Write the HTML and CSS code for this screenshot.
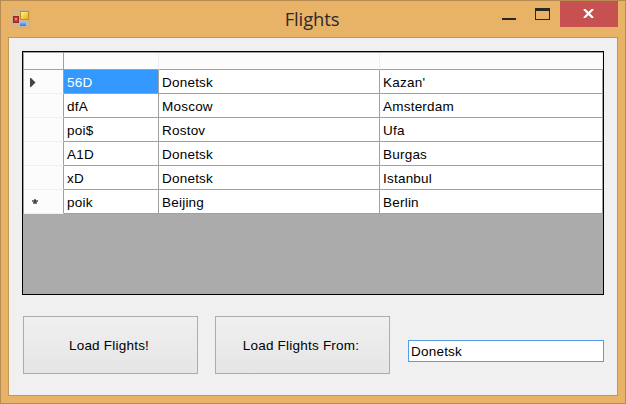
FILE: index.html
```html
<!DOCTYPE html>
<html lang="en">
<head>
<meta charset="utf-8">
<title>Flights</title>
<link rel="stylesheet" href="styles.css">
</head>
<body>
<div class="window">
  <header class="titlebar">
    <svg class="app-icon" width="18" height="18" viewBox="0 0 18 18">
      <defs>
        <linearGradient id="gold" x1="0" y1="0" x2="1" y2="1"><stop offset="0" stop-color="#fff3a0"/><stop offset="1" stop-color="#e8ac08"/></linearGradient>
        <linearGradient id="blue" x1="0" y1="0" x2="0" y2="1"><stop offset="0" stop-color="#8fc0fb"/><stop offset="1" stop-color="#2f76e0"/></linearGradient>
      </defs>
      <path d="M.5 .5h17v17H.5z" fill="#cbb897" stroke="#c8b08a"/>
      <path d="M2 2h4v3H2zM2 14h4v2H2z" fill="#e2b266"/>
      <rect x="1.5" y="6.5" width="5" height="6" fill="#c93a34" stroke="#a02420"/>
      <rect x="3" y="8" width="2" height="2" fill="#e58880"/>
      <rect x="8.5" y="1.5" width="8" height="8" fill="url(#gold)" stroke="#c2921c"/>
      <rect x="8" y="12" width="6" height="4" fill="url(#blue)"/>
    </svg>
    <h1 class="title">Flights</h1>
    <div class="controls">
      <svg class="minimize" width="14" height="12" viewBox="0 0 14 12"><path d="M0 10h14v2H0z" fill="#282828"/></svg>
      <svg class="maximize" width="15" height="12" viewBox="0 0 15 12"><path d="M0 0h15v12H0zM1 3v8h13V3z" fill="#282828" fill-rule="evenodd"/></svg>
      <div class="close">
        <svg width="11" height="9" viewBox="0 0 11 9"><path d="M1 0L10 9M10 0L1 9" stroke="#fff" stroke-width="2.2"/></svg>
      </div>
    </div>
  </header>
  <main class="client">
    <div class="grid-view">
      <table class="grid">
        <colgroup><col class="c-head"><col class="c-code"><col class="c-from"><col class="c-to"></colgroup>
        <thead><tr><th class="corner"></th><th></th><th></th><th></th></tr></thead>
        <tbody>
          <tr><th><svg class="marker" width="6" height="9" viewBox="0 0 6 9"><path d="M0 0h1L5.5 4.5L1 9H0z" fill="#444"/></svg></th><td class="selected">56D</td><td>Donetsk</td><td>Kazan'</td></tr>
          <tr><th></th><td>dfA</td><td>Moscow</td><td>Amsterdam</td></tr>
          <tr><th></th><td>poi$</td><td>Rostov</td><td>Ufa</td></tr>
          <tr><th></th><td>A1D</td><td>Donetsk</td><td>Burgas</td></tr>
          <tr><th></th><td>xD</td><td>Donetsk</td><td>Istanbul</td></tr>
          <tr><th><svg class="marker new-row" width="6" height="6" viewBox="0 0 6 6"><path d="M2 0h2v1h2v2H5v2H1V3H0V1h2z" fill="#777"/><path d="M2 1h2v3H2z" fill="#444"/></svg></th><td>poik</td><td>Beijing</td><td>Berlin</td></tr>
        </tbody>
      </table>
    </div>
    <div class="actions">
      <button class="button">Load Flights!</button>
      <button class="button">Load Flights From:</button>
      <input class="city" type="text" value="Donetsk">
    </div>
  </main>
</div>
</body>
</html>
```
FILE: styles.css
```css
* { box-sizing: border-box; }
body {
  margin: 0;
  font-family: "Liberation Sans", Arial, sans-serif;
  font-size: 13.5px;
  letter-spacing: 0.22px;
  color: #000;
}
.window {
  width: 626px;
  height: 404px;
  display: flex;
  flex-direction: column;
  padding: 0 7px 7px;
  border: 1px solid #b58b51;
  background: #e8b267;
}
.titlebar {
  height: 36px;
  flex: none;
  display: grid;
  grid-template-columns: 116px 1fr 116px;
}
.app-icon { margin: 9px 0 0 4px; }
.title {
  margin: 4px 2px 0 0;
  font: 400 18.4px/27px "Open Sans", "Noto Sans", sans-serif;
  letter-spacing: -0.1px;
  text-align: center;
  color: #2b2b2b;
}
.controls { display: flex; align-items: flex-start; }
.minimize { margin: 7px 19px 0 0; }
.maximize { margin: 7px 10px 0 0; }
.close {
  width: 58px;
  height: 26px;
  display: flex;
  padding: 8px 0 0 23px;
  background: #c75050;
}
.client {
  flex: 1;
  padding: 13px;
  border: 1px solid #c29657;
  background: #f0f0f0;
}
.grid-view {
  width: 582px;
  height: 244px;
  border: 1px solid #000;
  background: #ababab;
}
.grid {
  width: 580px;
  table-layout: fixed;
  border-collapse: separate;
  border-spacing: 0;
  border-top: 1px solid #a0a0a0;
  border-left: 1px solid #a0a0a0;
}
.c-head { width: 40px; }
.c-code { width: 95px; }
.c-from { width: 221px; }
.c-to { width: 223px; }
.grid th, .grid td {
  height: 24px;
  padding: 2px 0 0 3px;
  line-height: 20px;
  text-align: left;
  font-weight: 400;
  background: #fff;
  border-right: 1px solid #a0a0a0;
  border-bottom: 1px solid #a0a0a0;
}
.grid th {
  padding: 0;
  background: #fcfcfd;
  border-bottom-color: #e9f0f8;
}
.grid thead th {
  height: 17px;
  border-right-color: #e9f0f8;
  border-bottom-color: #a0a0a0;
}
.grid thead .corner { border-right-color: #a0a0a0; }
.grid tbody tr .selected { background: #3399ff; color: #fff; }
.marker { display: block; margin: 1px 0 0 6px; }
.new-row { margin: 0 0 0 8px; }
.actions { display: flex; margin-top: 21px; padding-left: 1px; }
.button {
  width: 175px;
  height: 58px;
  margin-right: 17px;
  padding: 0 3px 0 0;
  border: 1px solid #acacac;
  background: linear-gradient(#f0f0f0, #e5e5e5);
  font: inherit;
  letter-spacing: inherit;
  color: inherit;
}
.city {
  width: 196px;
  height: 22px;
  margin: 24px 0 0 1px;
  padding: 0 2px;
  border: 1px solid #569de5;
  outline: 0;
  background: #fff;
  font: inherit;
  letter-spacing: inherit;
  color: inherit;
}
```
